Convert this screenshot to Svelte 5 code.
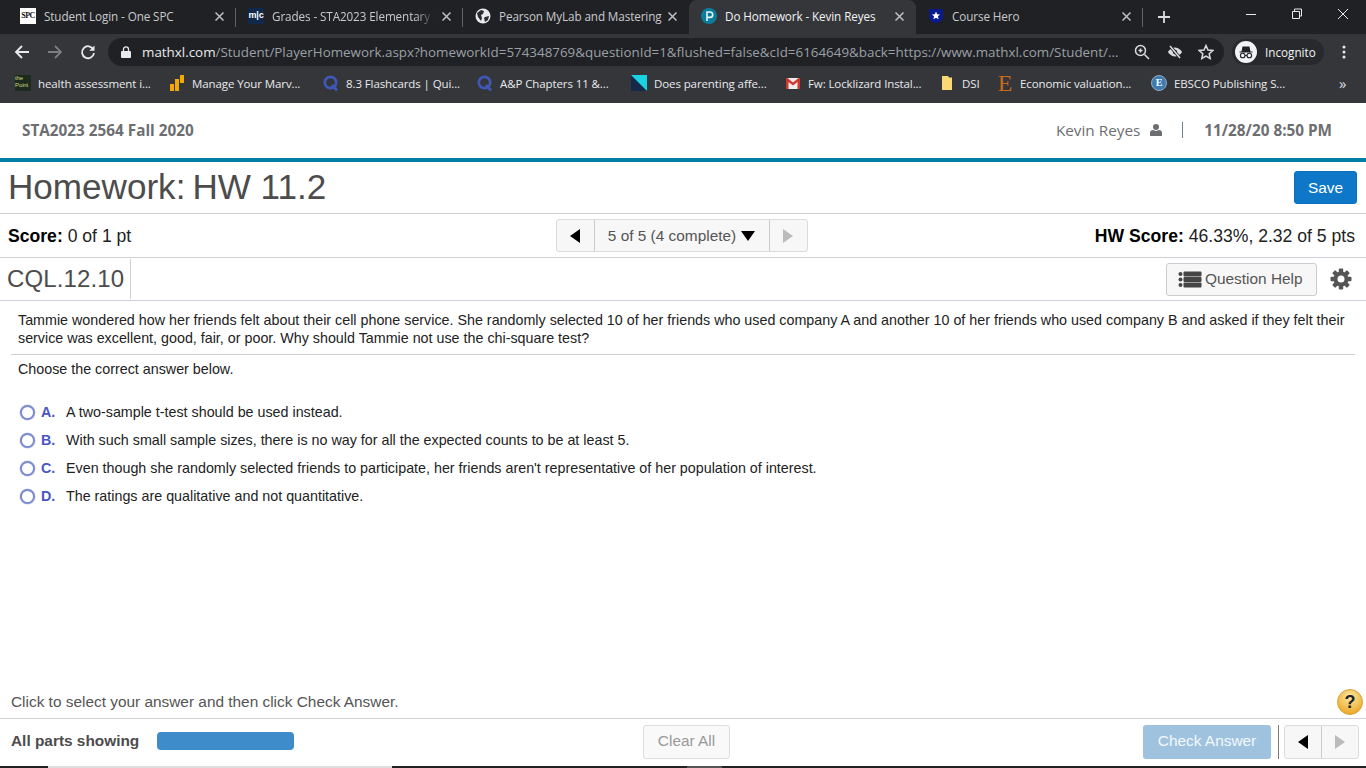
<script>
  const tabs = [
    { t: 'Student Login - One SPC', icon: 'spc' },
    { t: 'Grades - STA2023 Elementary S', icon: 'mlc', fade: true },
    { t: 'Pearson MyLab and Mastering', icon: 'globe' },
    { t: 'Do Homework - Kevin Reyes', icon: 'p', active: true },
    { t: 'Course Hero', icon: 'hero' }
  ];
  const marks = [
    { t: 'health assessment i...', i: 'point', w: 154 },
    { t: 'Manage Your Marv...', i: 'bars', w: 154 },
    { t: '8.3 Flashcards | Qui...', i: 'q', w: 154 },
    { t: 'A&P Chapters 11 &...', i: 'q', w: 154 },
    { t: 'Does parenting affe...', i: 'tri', w: 154 },
    { t: 'Fw: Locklizard Instal...', i: 'gm', w: 154 },
    { t: 'DSI', i: 'folder', w: 58 },
    { t: 'Economic valuation...', i: 'e', w: 154 },
    { t: 'EBSCO Publishing S...', i: 'eb', w: 154 }
  ];
  const answers = [
    ['A.', 'A two-sample t-test should be used instead.'],
    ['B.', 'With such small sample sizes, there is no way for all the expected counts to be at least 5.'],
    ['C.', "Even though she randomly selected friends to participate, her friends aren't representative of her population of interest."],
    ['D.', 'The ratings are qualitative and not quantitative.']
  ];
</script>

<div class="screen">
  <div class="chrome">
    <div class="tabstrip">
      {#each tabs as tab, n}
        <div class="tab" class:active={tab.active} class:sep={n < 2}>
          <span class="fav">
            {#if tab.icon === 'spc'}
              <span class="spc">SPC</span>
            {:else if tab.icon === 'mlc'}
              <span class="mlc">m|c</span>
            {:else if tab.icon === 'globe'}
              <svg width="16" height="16" viewBox="0 0 16 16"><circle cx="8" cy="8" r="7.500" fill="#e8eaed"/><path d="M2 5l4-3 3 1-1 3-2 1 1 3-1 3-3-4zM10 9l4-1-1 4-3 2-1-4z" fill="#2a2c30"/></svg>
            {:else if tab.icon === 'p'}
              <svg width="16" height="16" viewBox="0 0 16 16"><circle cx="8" cy="8" r="8" fill="#0a7d9c"/><path d="M6 13V4h3a2.600 2.600 0 0 1 0 5.400H6.500" fill="none" stroke="#e6f6fa" stroke-width="1.600"/></svg>
            {:else}
              <svg width="16" height="16" viewBox="0 0 16 16"><path d="M1 1h14v8c0 3-3 5-7 6.500C4 14 1 12 1 9z" fill="#0a1a8c"/><path d="M8 3.500l1.200 2.700 2.900.2-2.200 1.900.7 2.900L8 9.700l-2.600 1.500.7-2.900-2.200-1.900 2.900-.2z" fill="#fff"/></svg>
            {/if}
          </span>
          <span class="tabtext" class:fade={tab.fade}>{tab.t}</span>
          <svg class="close" width="9" height="9" viewBox="0 0 9 9"><path d="M.5.5l8 8M8.500.5l-8 8" stroke="currentColor" stroke-width="1.500"/></svg>
        </div>
      {/each}
      <span class="plus-sep"></span>
      <svg class="plus" width="12" height="12" viewBox="0 0 12 12"><path d="M6 0v12M0 6h12" stroke="#dadce0" stroke-width="1.800"/></svg>
      <div class="winctl">
        <svg width="12" height="12" viewBox="0 0 12 12"><path d="M1 6.500h10" stroke="#e8eaed"/></svg>
        <svg width="12" height="12" viewBox="0 0 12 12"><path d="M3.500 3V1h7v7H8.500M1.500 3.500h7v7h-7z" fill="none" stroke="#e8eaed"/></svg>
        <svg width="12" height="12" viewBox="0 0 12 12"><path d="M1 1l10 10M11 1L1 11" stroke="#e8eaed"/></svg>
      </div>
    </div>

    <div class="toolbar">
      <svg class="nav" width="16" height="16" viewBox="0 0 16 16"><path d="M15 8H2M8 2L2 8l6 6" fill="none" stroke="#e8eaed" stroke-width="1.800"/></svg>
      <svg class="nav" width="16" height="16" viewBox="0 0 16 16"><path d="M1 8h13M8 2l6 6-6 6" fill="none" stroke="#7b7d80" stroke-width="1.800"/></svg>
      <svg class="nav" width="16" height="16" viewBox="0 0 16 16"><path d="M13.400 5.500A6 6 0 1 0 14 9" fill="none" stroke="#e8eaed" stroke-width="1.800"/><path d="M14.500 1.500v5.200H9.300z" fill="#e8eaed"/></svg>
      <div class="omnibox">
        <svg width="10" height="12" viewBox="0 0 10 12"><rect y="5" width="10" height="7" rx="1" fill="#e8eaed"/><path d="M2.500 5.500V3.300a2.500 2.500 0 0 1 5 0v2.200" fill="none" stroke="#e8eaed" stroke-width="1.300"/></svg>
        <span class="url"><b>mathxl.com</b>/Student/PlayerHomework.aspx?homeworkId=574348769&amp;questionId=1&amp;flushed=false&amp;cId=6164649&amp;back=https://www.mathxl.com/Student/...</span>
        <svg class="o1" width="16" height="16" viewBox="0 0 16 16"><circle cx="6.500" cy="6.500" r="5" fill="none" stroke="#dadce0" stroke-width="1.500"/><path d="M10.500 10.500L15 15M4.500 6.500h4M6.500 4.500v4" stroke="#dadce0" stroke-width="1.500"/></svg>
        <svg class="o2" width="16" height="16" viewBox="0 0 16 16"><path d="M1 8s2.500-4.500 7-4.500S15 8 15 8s-2.500 4.500-7 4.500S1 8 1 8z" fill="#dadce0"/><circle cx="8" cy="8" r="2.200" fill="#202124"/><path d="M3 2l10 12" stroke="#202124" stroke-width="3"/><path d="M3 2l10 12" stroke="#dadce0" stroke-width="1.500"/></svg>
        <svg class="o3" width="16" height="16" viewBox="0 0 16 16"><path d="M8 1.500l2 4.500 4.800.5-3.600 3.200 1 4.800L8 12.100l-4.200 2.400 1-4.800L1.200 6.500 6 6z" fill="none" stroke="#dadce0" stroke-width="1.500"/></svg>
      </div>
      <div class="incog">
        <svg width="22" height="22" viewBox="0 0 22 22"><circle cx="11" cy="11" r="11" fill="#f1f3f4"/><path d="M4.500 10.500h13v1h-13zM7.500 5.500h7l1 5h-9z" fill="#202124"/><circle cx="7.700" cy="14.500" r="2.300" fill="none" stroke="#202124" stroke-width="1.100"/><circle cx="14.300" cy="14.500" r="2.300" fill="none" stroke="#202124" stroke-width="1.100"/><path d="M10 14.500h2" stroke="#202124" stroke-width="1"/></svg>
        <span>Incognito</span>
      </div>
      <svg class="menu" width="4" height="14" viewBox="0 0 4 14"><circle cx="2" cy="2" r="1.500" fill="#e8eaed"/><circle cx="2" cy="7" r="1.500" fill="#e8eaed"/><circle cx="2" cy="12" r="1.500" fill="#e8eaed"/></svg>
    </div>

    <div class="bookmarks">
      {#each marks as m}
        <div class="mark" style="width:{m.w}px">
          <span class="bfav">
            {#if m.i === 'point'}
              <span class="point">the<br />Point</span>
            {:else if m.i === 'bars'}
              <svg width="16" height="16" viewBox="0 0 16 16"><rect x="1" y="9" width="4" height="7" fill="#f2a900"/><rect x="6" y="4" width="4" height="12" fill="#f2a900"/><rect x="11" y="0" width="4" height="8" fill="#f2a900"/></svg>
            {:else if m.i === 'q'}
              <svg width="16" height="16" viewBox="0 0 16 16"><circle cx="7.500" cy="7.500" r="5.700" fill="none" stroke="#3f58b8" stroke-width="2.700"/><path d="M9 10l5 5.500" stroke="#3f58b8" stroke-width="2.700"/></svg>
            {:else if m.i === 'tri'}
              <svg width="16" height="16" viewBox="0 0 16 16"><rect width="16" height="16" fill="#15294b"/><path d="M0 0h16v16z" fill="#1ad3e0"/></svg>
            {:else if m.i === 'gm'}
              <svg width="16" height="16" viewBox="0 0 16 16"><rect x="1" y="3" width="14" height="11" fill="#eee"/><path d="M1 3v11h2.500V7L8 10.500 12.500 7v7H15V3h-1.500L8 7.500 2.500 3z" fill="#d1372c"/></svg>
            {:else if m.i === 'folder'}
              <svg width="16" height="16" viewBox="0 0 16 16"><path d="M3 1h6l1 1.500h3V15H3z" fill="#fbd876"/></svg>
            {:else if m.i === 'e'}
              <span class="e">E</span>
            {:else}
              <span class="eb">E</span>
            {/if}
          </span>
          <span class="marktext">{m.t}</span>
        </div>
      {/each}
      <span class="more">»</span>
    </div>
  </div>

  <div class="page">
    <header class="head">
      <strong class="course">STA2023 2564 Fall 2020</strong>
      <div class="user">
        <span>Kevin Reyes</span>
        <svg width="12" height="12" viewBox="0 0 12 12"><circle cx="6" cy="3" r="3" fill="#6d6e71"/><path d="M0 12V8.500C0 7 1.500 6 3 6l3 1 3-1c1.500 0 3 1 3 2.500V12z" fill="#6d6e71"/></svg>
        <i class="bar"></i>
        <strong>11/28/20 8:50 PM</strong>
      </div>
    </header>

    <div class="titlerow">
      <h1><span>Homework:</span> <span>HW 11.2</span></h1>
      <button class="save">Save</button>
    </div>

    <div class="scorerow">
      <div class="score"><b>Score:</b> 0 of 1 pt</div>
      <div class="pager">
        <span class="pbtn"><i class="left"></i></span>
        <span class="pmid">5 of 5 (4 complete) <i class="down"></i></span>
        <span class="pbtn"><i class="right"></i></span>
      </div>
      <div class="score hw"><b>HW Score:</b> 46.33%, 2.32 of 5 pts</div>
    </div>

    <div class="qrow">
      <div class="qid">CQL.12.10</div>
      <button class="help">
        <svg width="24" height="17" viewBox="0 0 24 17"><g fill="#454545"><circle cx="2.500" cy="3" r="2"/><circle cx="2.500" cy="8.500" r="2"/><circle cx="2.500" cy="14" r="2"/><rect x="5.500" y="0.500" width="18" height="5" rx="1"/><rect x="5.500" y="6" width="18" height="5" rx="1"/><rect x="5.500" y="11.500" width="18" height="5" rx="1"/></g></svg>
        Question Help
      </button>
      <svg class="gear" width="22" height="22" viewBox="0 0 22 22"><g fill="#555"><circle cx="11" cy="11" r="7.500"/><rect x="8.800" y="0.500" width="4.400" height="21" rx="1"/><rect x="8.800" y="0.500" width="4.400" height="21" rx="1" transform="rotate(45 11 11)"/><rect x="8.800" y="0.500" width="4.400" height="21" rx="1" transform="rotate(90 11 11)"/><rect x="8.800" y="0.500" width="4.400" height="21" rx="1" transform="rotate(135 11 11)"/></g><circle cx="11" cy="11" r="3.500" fill="#fff"/></svg>
    </div>

    <main class="question">
      <p class="stem">Tammie wondered how her friends felt about their cell phone service. She randomly selected 10 of her friends who used company A and another 10 of her friends who used company B and asked if they felt their service was excellent, good, fair, or poor. Why should Tammie not use the chi-square test?</p>
      <p class="choose">Choose the correct answer below.</p>
      <ul class="answers">
        {#each answers as a}
          <li><span class="radio"></span><b>{a[0]}</b><span>{a[1]}</span></li>
        {/each}
      </ul>
    </main>

    <div class="hint">
      <span>Click to select your answer and then click Check Answer.</span>
      <span class="q">?</span>
    </div>

    <footer class="foot">
      <b class="parts">All parts showing</b>
      <span class="progress"></span>
      <button class="clear">Clear All</button>
      <button class="check">Check Answer</button>
      <i class="vsep"></i>
      <div class="pager small">
        <span class="pbtn"><i class="left"></i></span>
        <span class="pbtn"><i class="right"></i></span>
      </div>
    </footer>
    <div class="taskbar"><span class="lit"></span><span class="gray"></span></div>
  </div>
</div>

<style>
  :global(body) { margin: 0; background: #fff; }
  .screen { width: 1366px; height: 768px; overflow: hidden; display: flex; flex-direction: column; font-family: "Liberation Sans", Arial, sans-serif; }
  .chrome { background: #35363a; font-family: "Open Sans", sans-serif; color: #e8eaed; flex: none; }
  .tabstrip { height: 34px; background: #202124; display: flex; align-items: flex-start; box-sizing: border-box; padding-left: 8px; }
  .tab { width: 227px; height: 34px; box-sizing: border-box; display: flex; align-items: center; padding: 0 12px 2px 12px; position: relative; font-size: 11.700px; color: #c8cacd; flex: none; letter-spacing: -0.100px; }
  .tab:nth-child(1) { width: 228px; }
  .tab:nth-child(3) { width: 226px; }
  .tab.active { background: #35363a; border-radius: 8px 8px 0 0; color: #f1f3f4; }
  .tab.sep::after { content: ""; position: absolute; right: 0; top: 8px; height: 19px; width: 1px; background: #5f6368; }
  .fav { width: 16px; height: 16px; flex: none; margin-right: 8px; display: flex; }
  .spc { width: 16px; height: 16px; background: #fff; color: #111; font: 700 8px/16px "Liberation Serif", serif; text-align: center; letter-spacing: -0.500px; }
  .mlc { width: 16px; height: 16px; background: #10294a; color: #fff; font: 700 9px/15px "Liberation Sans", sans-serif; text-align: center; }
  .tabtext { flex: 1; white-space: nowrap; overflow: hidden; }
  .tabtext.fade { -webkit-mask-image: linear-gradient(to right, #000 86%, transparent 98%); mask-image: linear-gradient(to right, #000 86%, transparent 98%); }
  .close { flex: none; color: #bdc1c6; margin-left: 4px; }
  .plus-sep { width: 1px; height: 19px; background: #5f6368; margin: 8px 0 0 -1px; }
  .plus { margin: 11px 0 0 15px; }
  .winctl { margin-left: auto; display: flex; gap: 34px; padding: 8px 17px 0 0; }
  .toolbar { height: 36px; display: flex; align-items: center; padding-left: 14px; box-sizing: border-box; }
  .nav { margin-right: 17px; flex: none; }
  .nav:nth-child(3) { margin-right: 12px; }
  .omnibox { width: 1116px; height: 28px; background: #202124; border-radius: 14px; display: flex; align-items: center; padding-left: 13px; box-sizing: border-box; flex: none; font-size: 13.380px; color: #9aa0a6; }
  .url { margin-left: 11px; width: 980px; white-space: nowrap; overflow: hidden; flex: none; }
  .url b { color: #e8eaed; font-weight: 400; }
  .o1 { margin-left: 12px; } .o2 { margin-left: 17px; } .o3 { margin-left: 15px; }
  .incog { margin-left: 8px; width: 92px; height: 26px; border-radius: 13px; background: #28292c; display: flex; align-items: center; gap: 8px; padding-left: 3px; box-sizing: border-box; font-size: 11.700px; color: #f1f3f4; flex: none; }
  .menu { margin-left: 18px; }
  .bookmarks { height: 33px; display: flex; align-items: center; padding: 0 0 7px 15px; box-sizing: border-box; font-size: 11.500px; letter-spacing: -0.100px; }
  .mark { display: flex; align-items: center; flex: none; }
  .bfav { width: 16px; height: 16px; flex: none; margin-right: 7px; display: flex; }
  .point { width: 16px; height: 16px; background: #1f2a1f; color: #c9dc7f; font: 6px/7px "Liberation Sans", sans-serif; overflow: hidden; }
  .e { color: #c8681a; font: 24px/16px "Liberation Serif", serif; width: 16px; text-align: center; }
  .eb { width: 16px; height: 16px; border-radius: 50%; background: #3b7cb4; border: 1px solid #9ab; box-sizing: border-box; color: #fff; font: 700 10px/14px "Liberation Serif", serif; text-align: center; }
  .marktext { white-space: nowrap; }
  .more { margin-left: 34px; font-size: 15px; line-height: 16px; color: #dadce0; }

  .page { flex: 1; display: flex; flex-direction: column; background: #fff; min-height: 0; }
  .head { height: 55px; border-bottom: 4px solid #007fa3; display: flex; align-items: center; justify-content: space-between; padding: 0 34px 2px 22px; box-sizing: content-box; height: 53px; font-family: "Open Sans", sans-serif; color: #6d6e71; font-size: 15.300px; flex: none; }
  .course { font-weight: 700; }
  .user { display: flex; align-items: center; }
  .user svg { margin-left: 10px; }
  .bar { width: 1px; height: 16px; background: #6d7e8a; margin: 0 21px 0 20px; }
  .titlerow { height: 51px; border-bottom: 1px solid #cfd0dc; display: flex; align-items: center; justify-content: space-between; padding: 0 9px 0 8px; flex: none; }
  h1 { margin: 0 0 2px; font-size: 35.100px; font-weight: 400; color: #4c4c4c; display: flex; gap: 7px; }
  .save { width: 63px; height: 33px; background: #0f77c7; border: 1px solid #0d6fbb; border-radius: 3px; color: #fff; font: 15.400px "Liberation Sans", sans-serif; padding: 0; }
  .scorerow { height: 43px; border-bottom: 1px solid #cfd0dc; display: flex; align-items: center; justify-content: space-between; padding: 0 11px 0 8px; flex: none; }
  .score { font-size: 17.600px; color: #222; width: 300px; padding-top: 2px; }
  .score b { color: #000; }
  .hw { text-align: right; }
  .pager { display: flex; height: 33px; border: 1px solid #dcdcdc; border-radius: 3px; background: #f7f7f7; box-sizing: border-box; }
  .pbtn { width: 37px; display: flex; align-items: center; justify-content: center; }
  .pbtn:first-child { border-right: 1px solid #ccc; }
  .pmid { width: 175px; border-right: 1px solid #ccc; display: flex; align-items: center; justify-content: center; gap: 5px; box-sizing: border-box; font-size: 15.400px; color: #555; }
  .left { border: 6px solid transparent; border-left: 0; border-right: 10px solid #000; border-top-width: 7px; border-bottom-width: 7px; }
  .right { border: 6px solid transparent; border-right: 0; border-left: 10px solid #bbb; border-top-width: 7px; border-bottom-width: 7px; }
  .down { border: 7px solid transparent; border-bottom: 0; border-top: 10px solid #000; border-left-width: 7.500px; border-right-width: 7.500px; }
  .qrow { height: 42px; border-bottom: 1px solid #cfd0dc; display: flex; align-items: center; padding-right: 14px; flex: none; }
  .qid { height: 40px; line-height: 40px; padding: 0 6px 0 7px; border-right: 1px solid #cfd0dc; font-size: 24px; letter-spacing: .12px; color: #4c4c4c; }
  .help { margin-left: auto; width: 151px; height: 33px; background: #f7f7f7; border: 1px solid #ccc; border-radius: 3px; display: flex; align-items: center; gap: 3px; padding: 0 0 0 11px; font: 15.400px "Liberation Sans", sans-serif; color: #555; white-space: nowrap; }
  .gear { margin-left: 13px; }
  .question { flex: 1; padding: 11px 11px 0 11px; font-size: 14.300px; color: #222; min-height: 0; }
  .stem { margin: 0; padding: 0 0 7px 7px; line-height: 17.600px; border-bottom: 1px solid #cfcfcf; }
  .choose { margin: 5px 0 0 7px; line-height: 18px; }
  .answers { list-style: none; margin: 20px 0 0; padding: 0; }
  .answers li { display: flex; align-items: center; height: 28px; }
  .radio { width: 15px; height: 15px; border: 2px solid #7d8bd0; border-radius: 50%; background: #fff; box-sizing: border-box; margin: 0 6px 0 9px; box-shadow: 0 0 0 .5px #c5cbe8; }
  .answers b { width: 25px; color: #4a56c4; }
  .hint { height: 33px; flex: none; border-bottom: 1px solid #cfd0dc; display: flex; align-items: center; justify-content: space-between; padding: 0 3px 0 11px; font-size: 15.400px; color: #555; }
  .q { width: 26px; height: 26px; border-radius: 50%; background: radial-gradient(circle at 50% 30%, #fde9a8, #eaa61e 85%); border: 1px solid #d3a13a; box-sizing: border-box; color: #222; font-weight: 700; font-size: 18px; line-height: 24px; text-align: center; }
  .foot { height: 47px; flex: none; display: flex; align-items: center; padding: 0 0 2px 11px; box-sizing: border-box; }
  .parts { font-size: 15.400px; color: #4c4c4c; width: 146px; white-space: nowrap; margin-bottom: 2px; }
  .progress { width: 137px; height: 18px; border-radius: 4px; background: #3f8ccb; margin-bottom: 1px; }
  .clear { margin-left: 349px; width: 87px; height: 34px; background: #f9f9f9; border: 1px solid #ddd; border-radius: 3px; color: #999; font: 15.400px "Liberation Sans", sans-serif; padding: 0 0 1px; }
  .check { margin-left: 413px; width: 128px; height: 34px; background: #9fc3df; border: 0; border-radius: 3px; color: #f4f8fb; font: 15.400px "Liberation Sans", sans-serif; padding: 0 0 1px; }
  .vsep { width: 1px; height: 34px; background: #777; margin: 0 5px 0 7px; }
  .small { height: 34px; width: 75px; }
  .small .pbtn { height: 100%; }
  .taskbar { height: 2px; flex: none; margin-top: auto; background: #222; display: flex; }
  .lit { margin-left: 48px; width: 344px; background: #ddd; }
  .gray { margin-left: 295px; width: 35px; background: #555; }
</style>
